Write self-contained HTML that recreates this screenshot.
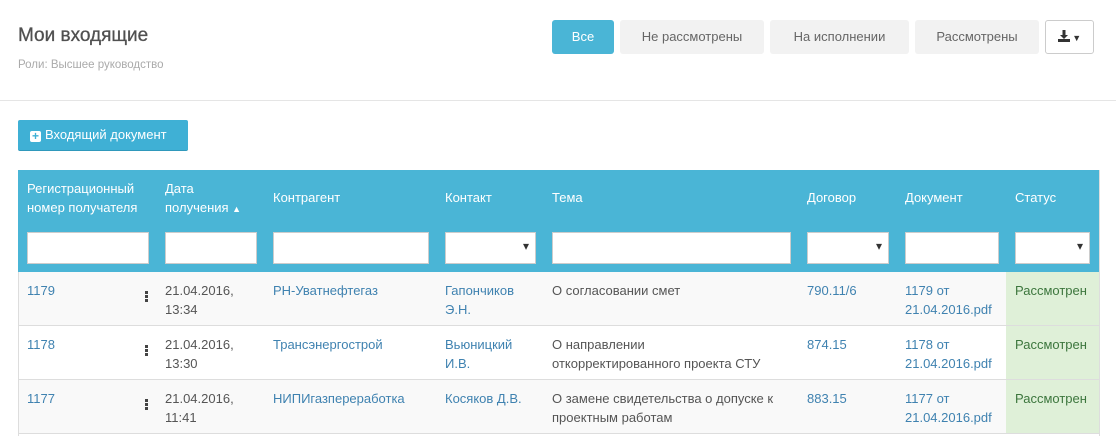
<!DOCTYPE html>
<html><head><meta charset="utf-8"><style>
*{box-sizing:border-box;margin:0;padding:0}
body{width:1116px;height:436px;overflow:hidden;background:#fff;font-family:"Liberation Sans",sans-serif;font-size:13px;color:#555;position:relative}
.abs{position:absolute}
h1{position:absolute;left:18px;top:25px;font-size:19px;font-weight:normal;color:#505050;-webkit-text-stroke:0.3px #505050}
.sub{left:18px;top:59px;font-size:11.5px;color:#aaa}
.hr{left:0;top:100px;width:1116px;height:1px;background:#e5e5e5}
.btn{position:absolute;top:20px;height:34px;border-radius:3px;background:#f2f2f2;color:#666;text-align:center;line-height:34px;font-size:13px}
.add{left:18px;top:120px;width:170px;height:31px;background:#3fb0d5;border-bottom:1px solid #2f98bb;border-radius:2px;color:#fff;line-height:30px;padding-left:12px}
.plus{display:inline-block;width:11px;height:11px;background:#fff;border-radius:2px;color:#3fb0d5;font-weight:bold;font-size:12px;line-height:11px;text-align:center;vertical-align:-1px;margin-right:4px}
.head{left:18px;top:170px;width:1082px;height:102px;background:#4ab5d6}
.ht{position:absolute;color:#fff;font-size:13px;line-height:19px}
.inp{position:absolute;top:232px;height:32px;background:#fff;border:1px solid #ccc}
.sel::after{content:"▾";position:absolute;right:6px;top:6px;font-size:12px;color:#333}
.row{position:absolute;left:18px;width:1082px;height:54px;border-bottom:1px solid #ddd}
.c{position:absolute;top:9px;line-height:19px;font-size:13px}
.l{color:#3f82b0}
.st{position:absolute;left:988px;top:0;width:94px;height:53px;background:#dff0d8;color:#3c763d;padding:9px 0 0 9px;line-height:19px}
.dots{position:absolute;left:127px;top:19px;width:3px}
.dots i{display:block;width:3px;height:3px;background:#444;margin-bottom:1px}
</style></head><body>
<h1>Мои входящие</h1>
<div class="abs sub">Роли: Высшее руководство</div>
<div class="btn" style="left:552px;width:62px;background:#4ab5d6;color:#fff">Все</div>
<div class="btn" style="left:620px;width:144px">Не рассмотрены</div>
<div class="btn" style="left:770px;width:139px">На исполнении</div>
<div class="btn" style="left:915px;width:124px">Рассмотрены</div>
<div class="btn" style="left:1045px;width:49px;background:#fff;border:1px solid #ccc;line-height:32px;color:#333">
<svg width="12" height="12" viewBox="0 0 12 12" style="vertical-align:-1px"><path d="M4.5 0h3v5h2.5L6 9 2 5h2.5z" fill="#333"/><rect x="0" y="9" width="12" height="3" fill="#333"/></svg><span style="font-size:9px"> ▼</span></div>
<div class="abs hr"></div>
<div class="abs add"><span class="plus">+</span>Входящий документ</div>
<div class="abs head"></div>
<div class="ht" style="left:27px;top:179px">Регистрационный<br>номер получателя</div>
<div class="ht" style="left:165px;top:179px">Дата<br>получения <span style="font-size:9px">▲</span></div>
<div class="ht" style="left:273px;top:188px">Контрагент</div>
<div class="ht" style="left:445px;top:188px">Контакт</div>
<div class="ht" style="left:552px;top:188px">Тема</div>
<div class="ht" style="left:807px;top:188px">Договор</div>
<div class="ht" style="left:905px;top:188px">Документ</div>
<div class="ht" style="left:1015px;top:188px">Статус</div>
<div class="inp" style="left:27px;width:122px"></div>
<div class="inp" style="left:165px;width:92px"></div>
<div class="inp" style="left:273px;width:156px"></div>
<div class="inp sel" style="left:445px;width:91px"></div>
<div class="inp" style="left:552px;width:239px"></div>
<div class="inp sel" style="left:807px;width:82px"></div>
<div class="inp" style="left:905px;width:94px"></div>
<div class="inp sel" style="left:1015px;width:75px"></div>

<div class="row" style="top:272px;background:#f9f9f9">
<div class="c l" style="left:9px">1179</div><div class="dots"><i></i><i></i><i></i></div>
<div class="c" style="left:147px">21.04.2016,<br>13:34</div>
<div class="c l" style="left:255px">РН-Уватнефтегаз</div>
<div class="c l" style="left:427px">Гапончиков<br>Э.Н.</div>
<div class="c" style="left:534px">О согласовании смет</div>
<div class="c l" style="left:789px">790.11/6</div>
<div class="c l" style="left:887px">1179 от<br>21.04.2016.pdf</div>
<div class="st">Рассмотрен</div></div>

<div class="row" style="top:326px;background:#fff">
<div class="c l" style="left:9px">1178</div><div class="dots"><i></i><i></i><i></i></div>
<div class="c" style="left:147px">21.04.2016,<br>13:30</div>
<div class="c l" style="left:255px">Трансэнергострой</div>
<div class="c l" style="left:427px">Вьюницкий<br>И.В.</div>
<div class="c" style="left:534px">О направлении<br>откорректированного проекта СТУ</div>
<div class="c l" style="left:789px">874.15</div>
<div class="c l" style="left:887px">1178 от<br>21.04.2016.pdf</div>
<div class="st">Рассмотрен</div></div>

<div class="row" style="top:380px;background:#f9f9f9">
<div class="c l" style="left:9px">1177</div><div class="dots"><i></i><i></i><i></i></div>
<div class="c" style="left:147px">21.04.2016,<br>11:41</div>
<div class="c l" style="left:255px">НИПИгазпереработка</div>
<div class="c l" style="left:427px">Косяков Д.В.</div>
<div class="c" style="left:534px">О замене свидетельства о допуске к<br>проектным работам</div>
<div class="c l" style="left:789px">883.15</div>
<div class="c l" style="left:887px">1177 от<br>21.04.2016.pdf</div>
<div class="st">Рассмотрен</div></div>
<div class="abs" style="left:18px;top:272px;width:1px;height:164px;background:#ddd"></div>
<div class="abs" style="left:1099px;top:170px;width:1px;height:266px;background:#ddd"></div>
</body></html>
